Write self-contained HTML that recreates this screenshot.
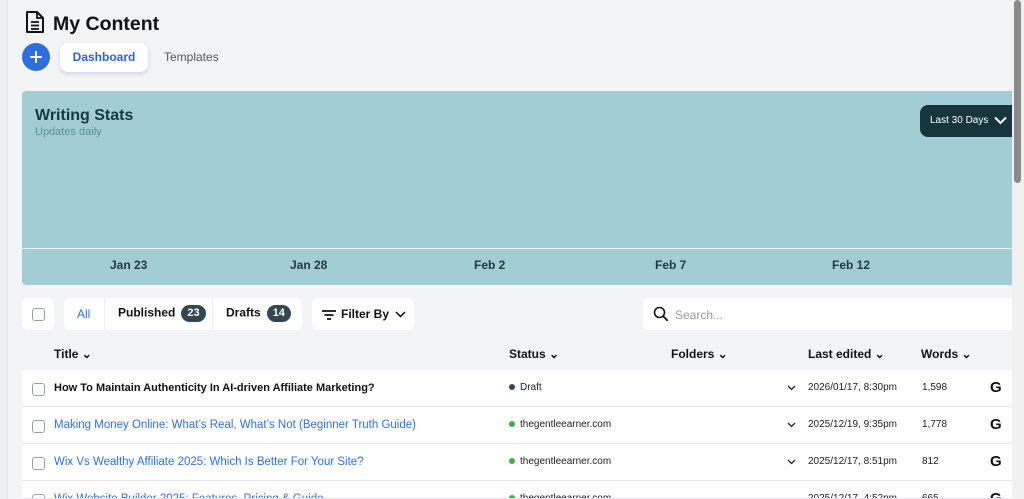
<!DOCTYPE html>
<html style="width:1024px;height:499px;overflow:hidden"><head><style>
*{box-sizing:border-box;margin:0;padding:0}
body{width:1024px;height:499px;overflow:hidden;background:#f3f4f6;font-family:"Liberation Sans",sans-serif;position:relative;color:#111}
.abs{position:absolute}
.lbar{left:0;top:0;width:8px;height:499px;background:#eceef1;border-right:1px solid #e0e2e6}
.sb{left:1012px;top:0;width:12px;height:499px;background:#f1f1f1}
.thumb{left:1014px;top:0;width:7px;height:183px;background:#8a8a8a;border-radius:4px}
.chart{left:22px;top:91px;width:990px;height:194px;background:#a3cdd5;border-radius:4px 0 0 4px}
.date{top:258px;font-size:12px;font-weight:bold;color:#1f3a40}
.box{background:#fff;border-radius:6px}
.cb{width:13px;height:13px;border:1.5px solid #9aa0a6;border-radius:3px;background:#fff}
.badge{display:inline-block;background:#344652;color:#fff;border-radius:9px;font-size:11px;font-weight:bold;padding:2px 6px;margin-left:6px;line-height:13px;vertical-align:middle}
.hd{top:347px;font-size:12px;font-weight:bold}
.row{left:22px;width:990px;height:37px;background:#fff;border-bottom:1px solid #e5e7eb}
.t{position:absolute;left:32px;top:12px;font-size:11px;font-weight:bold;color:#111}
.t.b{color:#2f6fe0;font-weight:normal;font-size:11.5px}
.st{position:absolute;left:487px;top:12px;font-size:10px;color:#222}
.dot{display:inline-block;width:6px;height:6px;border-radius:3px;background:#3fae4a;margin-right:5px}
.le{position:absolute;left:786px;top:12px;font-size:10px;color:#222}
.w{position:absolute;left:900px;top:12px;font-size:10px;color:#222}
.g{position:absolute;left:968px;top:9px;font-size:15px;font-weight:bold}
.ch{position:absolute;left:765px;top:15px}
</style></head><body>
<div class="abs lbar"></div>
<svg class="abs" style="left:24px;top:10px" width="22" height="24" viewBox="0 0 22 24"><path d="M3 2h10l6 6v14H3z" fill="none" stroke="#111" stroke-width="2" stroke-linejoin="round"/><path d="M13 2v6h6M7 12h8M7 15.5h8M7 19h8" stroke="#111" stroke-width="1.8" fill="none"/></svg>
<div class="abs" style="left:53px;top:13px;font-size:19.5px;font-weight:bold">My Content</div>
<div class="abs" style="left:22px;top:43px;width:28px;height:28px;border-radius:14px;background:#2d6fe3"><svg class="abs" style="left:7px;top:7px" width="14" height="14" viewBox="0 0 14 14"><path d="M7 1v12M1 7h12" stroke="#fff" stroke-width="2"/></svg></div>
<div class="abs box" style="left:60px;top:43px;width:88px;height:29px;border-radius:8px;box-shadow:0 2px 4px rgba(60,90,200,.2);color:#2f5fd8;font-size:12px;font-weight:bold;text-align:center;line-height:29px">Dashboard</div>
<div class="abs" style="left:164px;top:50px;font-size:12px;color:#555">Templates</div>
<div class="abs chart">
<div class="abs" style="left:13px;top:16px;font-size:16px;font-weight:bold;color:#163840">Writing Stats</div>
<div class="abs" style="left:13px;top:35px;font-size:11px;color:#5a8f9c">Updates daily</div>
<div class="abs" style="left:898px;top:14px;width:92px;height:32px;background:#16363f;border-radius:8px 0 0 8px;color:#fff;font-size:10px;line-height:32px;padding-left:10px">Last 30 Days <svg style="vertical-align:middle;margin-left:3px" width="13" height="9" viewBox="0 0 13 9"><path d="M1 1.5l5.5 5.5 5.5-5.5" stroke="#fff" stroke-width="2" fill="none"/></svg></div>
<div class="abs" style="left:0;top:157px;width:990px;height:1px;background:#e8f4f6"></div>
</div>
<div class="abs date" style="left:110px">Jan 23</div>
<div class="abs date" style="left:290px">Jan 28</div>
<div class="abs date" style="left:474px">Feb 2</div>
<div class="abs date" style="left:655px">Feb 7</div>
<div class="abs date" style="left:832px">Feb 12</div>
<div class="abs box" style="left:22px;top:298px;width:32px;height:32px"><div class="cb abs" style="left:10px;top:10px"></div></div>
<div class="abs box" style="left:64px;top:298px;width:238px;height:32px;font-size:12px;font-weight:bold">
<span class="abs" style="left:13px;top:9px;color:#2f6fe0;font-weight:normal">All</span>
<div class="abs" style="left:40px;top:0;width:1px;height:32px;background:#eee"></div>
<span class="abs" style="left:54px;top:7px">Published<span class="badge">23</span></span>
<div class="abs" style="left:148px;top:0;width:1px;height:32px;background:#eee"></div>
<span class="abs" style="left:162px;top:7px">Drafts<span class="badge">14</span></span>
</div>
<div class="abs box" style="left:312px;top:298px;width:102px;height:32px;font-size:12px;font-weight:bold;line-height:32px;padding-left:10px">
<svg style="vertical-align:middle;margin-right:5px" width="14" height="10" viewBox="0 0 14 10"><path d="M0 1h14M2.5 5h9M5 9h4" stroke="#111" stroke-width="1.8"/></svg>Filter By <svg style="vertical-align:middle;margin-left:3px" width="11" height="7" viewBox="0 0 11 7"><path d="M1 1l4.5 4.5L10 1" stroke="#111" stroke-width="1.5" fill="none"/></svg></div>
<div class="abs box" style="left:643px;top:298px;width:369px;height:32px;border-radius:6px 0 0 6px">
<svg class="abs" style="left:10px;top:8px" width="16" height="16" viewBox="0 0 16 16"><circle cx="6.5" cy="6.5" r="5" stroke="#111" stroke-width="1.6" fill="none"/><path d="M10.2 10.2l4.5 4.5" stroke="#111" stroke-width="1.8"/></svg>
<span class="abs" style="left:32px;top:10px;font-size:12px;color:#999">Search...</span></div>
<div class="abs hd" style="left:54px">Title ⌄</div>
<div class="abs hd" style="left:509px">Status ⌄</div>
<div class="abs hd" style="left:671px">Folders ⌄</div>
<div class="abs hd" style="left:808px">Last edited ⌄</div>
<div class="abs hd" style="left:921px">Words ⌄</div>
<div class="abs row" style="top:370px"><div class="cb abs" style="left:10px;top:13px"></div><div class="t">How To Maintain Authenticity In AI-driven Affiliate Marketing?</div><div class="st"><span class="dot" style="background:#34495a"></span>Draft</div><svg class="ch" width="9" height="6" viewBox="0 0 9 6"><path d="M1 1l3.5 3.5L8 1" stroke="#222" stroke-width="1.3" fill="none"/></svg><div class="le">2026/01/17, 8:30pm</div><div class="w">1,598</div><div class="g">G</div></div>
<div class="abs row" style="top:407px"><div class="cb abs" style="left:10px;top:13px"></div><div class="t b">Making Money Online: What’s Real, What’s Not (Beginner Truth Guide)</div><div class="st"><span class="dot"></span>thegentleearner.com</div><svg class="ch" width="9" height="6" viewBox="0 0 9 6"><path d="M1 1l3.5 3.5L8 1" stroke="#222" stroke-width="1.3" fill="none"/></svg><div class="le">2025/12/19, 9:35pm</div><div class="w">1,778</div><div class="g">G</div></div>
<div class="abs row" style="top:444px"><div class="cb abs" style="left:10px;top:13px"></div><div class="t b">Wix Vs Wealthy Affiliate 2025: Which Is Better For Your Site?</div><div class="st"><span class="dot"></span>thegentleearner.com</div><svg class="ch" width="9" height="6" viewBox="0 0 9 6"><path d="M1 1l3.5 3.5L8 1" stroke="#222" stroke-width="1.3" fill="none"/></svg><div class="le">2025/12/17, 8:51pm</div><div class="w">812</div><div class="g">G</div></div>
<div class="abs row" style="top:481px;height:18px;overflow:hidden"><div class="cb abs" style="left:10px;top:13px"></div><div class="t b">Wix Website Builder 2025: Features, Pricing &amp; Guide</div><div class="st"><span class="dot"></span>thegentleearner.com</div><div class="le">2025/12/17, 4:52pm</div><div class="w">665</div><div class="g">G</div></div>
<div class="abs sb"></div><div class="abs thumb"></div>
</body></html>
